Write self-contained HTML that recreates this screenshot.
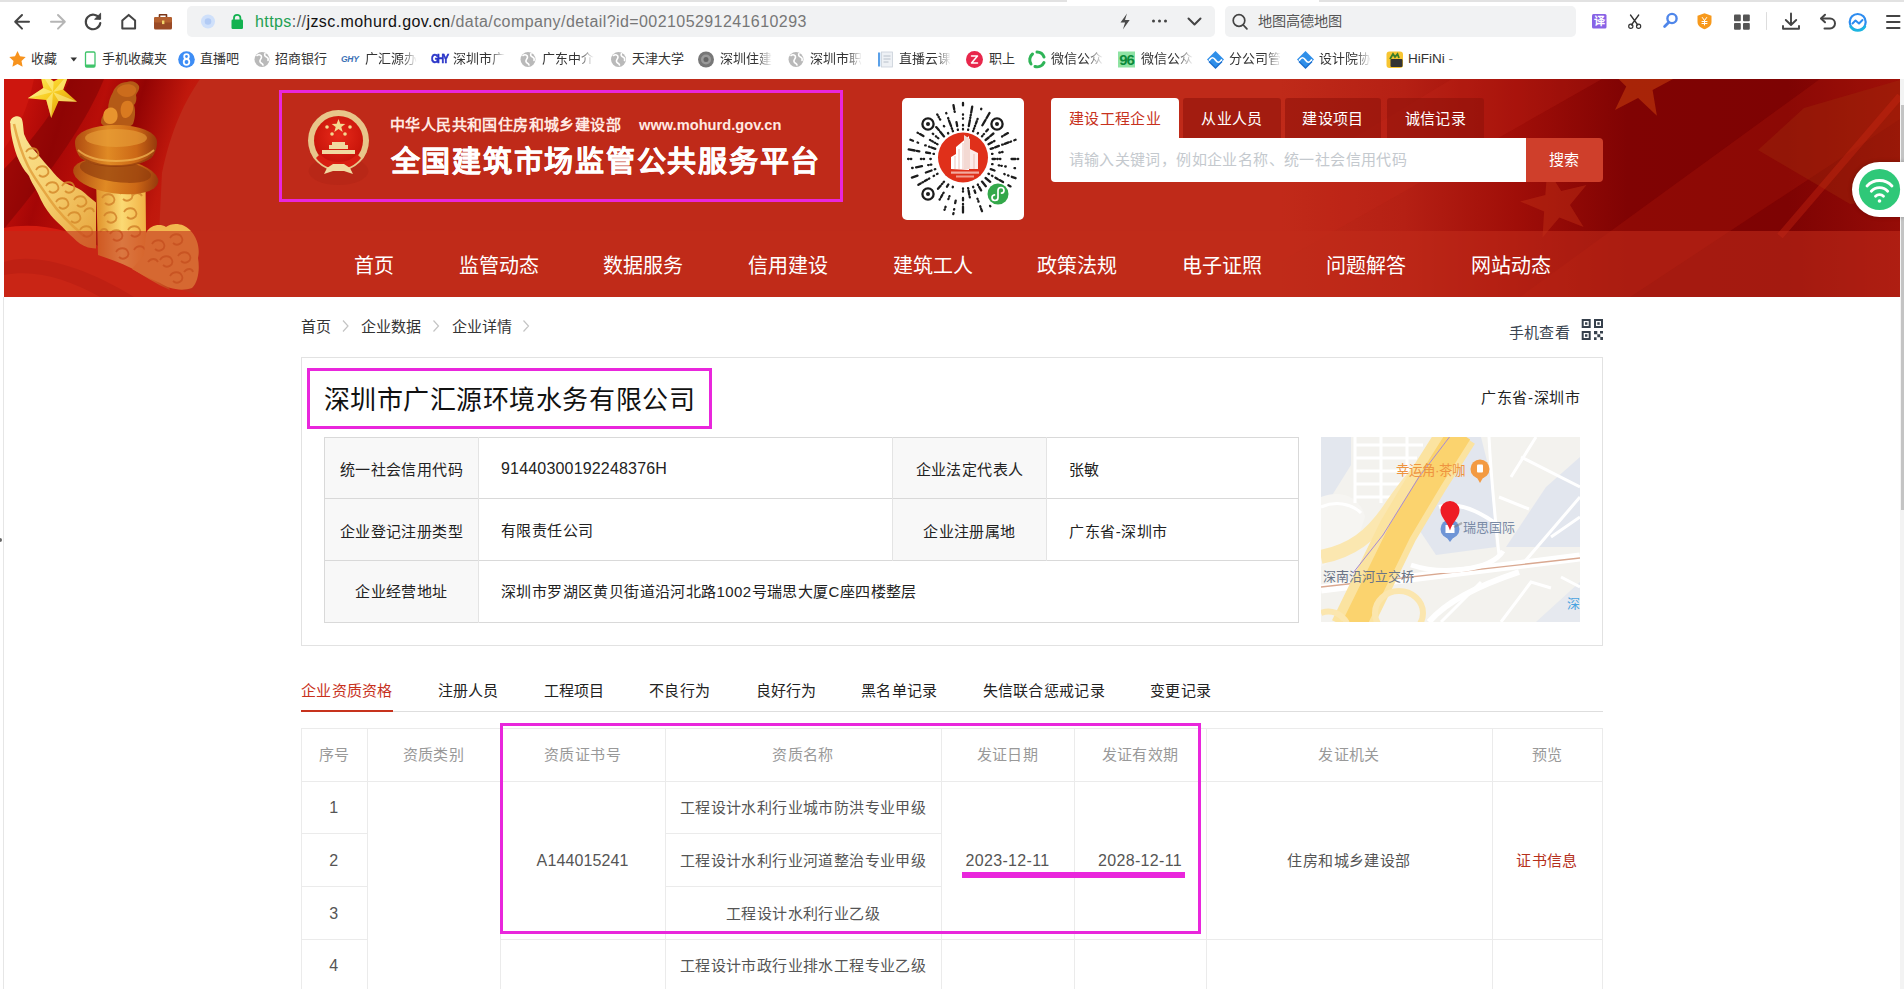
<!DOCTYPE html>
<html lang="zh-CN"><head><meta charset="utf-8">
<style>
*{box-sizing:border-box;margin:0;padding:0}
html,body{width:1904px;height:989px;overflow:hidden;background:#fff;font-family:"Liberation Sans",sans-serif;color:#333}
.abs{position:absolute}
#root{position:relative;width:1904px;height:989px;overflow:hidden;background:#fff}
svg{position:absolute;overflow:visible}
/* browser chrome */
#addr{left:187px;top:6px;width:1028px;height:31px;background:#f1f2f3;border-radius:5px}
#sbox{left:1225px;top:6px;width:351px;height:31px;background:#f1f2f3;border-radius:5px}
.url{left:255px;top:12px;font-size:16px;letter-spacing:.42px;line-height:20px;color:#777;white-space:nowrap}
.bm{position:absolute;top:50px;font-size:13px;line-height:18px;color:#333;white-space:nowrap}
.fade{-webkit-mask-image:linear-gradient(90deg,#000 70%,transparent 100%);mask-image:linear-gradient(90deg,#000 70%,transparent 100%)}
/* header */
#hdr{left:4px;top:79px;width:1896px;height:218px;background:#bf2a19;overflow:hidden}
#navbar{left:0;top:152px;width:1896px;height:66px;background:rgba(194,44,27,0.57)}
.nav{position:absolute;top:253px;font-size:20px;line-height:26px;color:#fff;white-space:nowrap}
.mag{position:absolute;border:3px solid #e926dc}
.tab{position:absolute;top:98px;height:40px;background:rgba(140,16,10,0.55);color:#fff;font-size:15px;letter-spacing:.4px;line-height:41px;text-align:center;border-radius:3px 3px 0 0;white-space:nowrap}
/* content */
.bc{position:absolute;top:317px;font-size:15px;line-height:20px;color:#333;white-space:nowrap}
#card{left:301px;top:357px;width:1302px;height:289px;border:1px solid #e2e2e2;background:#fff}
.cell{position:absolute;font-size:15px;letter-spacing:.4px;line-height:20px;color:#222;white-space:nowrap}
.lab{position:absolute;background:#f8f8f8}
.ctab{position:absolute;top:681px;font-size:15px;letter-spacing:.3px;line-height:20px;color:#222;white-space:nowrap}
.th{position:absolute;top:745px;font-size:15px;letter-spacing:.4px;line-height:20px;color:#999;white-space:nowrap;transform:translateX(-50%)}
.td{position:absolute;font-size:15px;letter-spacing:.4px;line-height:20px;color:#555;white-space:nowrap;transform:translateX(-50%)}
.vl{position:absolute;width:1px;background:#ebebeb}
.hl{position:absolute;height:1px;background:#ebebeb}
.gl{position:absolute;background:#d9d9d9}
</style></head><body><div id="root">
<!-- ================= CHROME ================= -->
<div class="abs" style="left:0;top:0;width:1904px;height:2px;background:#e2e2e2"></div>
<div class="abs" style="left:1067px;top:0;width:252px;height:2px;background:#fff"></div>
<div class="abs" id="addr"></div>
<div class="abs" id="sbox"></div>
<svg style="left:0;top:0" width="1904" height="42" viewBox="0 0 1904 42" fill="none" stroke-linecap="round" stroke-linejoin="round">
  <!-- back -->
  <path d="M29 21.8H15.5M22 15l-6.8 6.8L22 28.6" stroke="#444" stroke-width="2"/>
  <!-- forward -->
  <path d="M51 21.8h13.5M58 15l6.8 6.8L58 28.6" stroke="#b5b5b5" stroke-width="2"/>
  <!-- reload -->
  <path d="M99.5 18.5A7.3 7.3 0 1 0 100.3 23" stroke="#444" stroke-width="2.1"/>
  <path d="M100.6 13.6v5.6h-5.6z" fill="#444" stroke="#444" stroke-width="1"/>
  <!-- home -->
  <path d="M122.3 20.5l6.4-5.6 6.4 5.6v8h-12.8z" stroke="#444" stroke-width="2"/>
  <!-- briefcase -->
  <rect x="154" y="17" width="18" height="12.5" rx="1.5" fill="#9a4a26"/>
  <path d="M159.5 17v-2.2h7V17" stroke="#7a3517" stroke-width="1.6"/>
  <rect x="154" y="17" width="18" height="5.5" rx="1.5" fill="#b4602f"/>
  <rect x="162" y="20.5" width="2.4" height="3.6" fill="#f0d36a"/>
  <!-- addr icons -->
  <circle cx="208" cy="21.5" r="7" fill="#cfe0fa"/><circle cx="208" cy="21.5" r="3.3" fill="#b2cbf5"/>
  <rect x="231.5" y="19.5" width="11.5" height="9.5" rx="1.2" fill="#13b250"/>
  <path d="M234 19.5v-1.5a3.2 3.2 0 0 1 6.4 0v1.5" stroke="#13b250" stroke-width="1.8"/>
  <!-- lightning -->
  <path d="M1127 13.5l-6.5 9h4.6l-2.2 7 6.8-9.4h-4.7z" fill="#4a4a4a"/>
  <!-- dots -->
  <circle cx="1153.5" cy="21" r="1.5" fill="#444"/><circle cx="1159.5" cy="21" r="1.5" fill="#444"/><circle cx="1165.5" cy="21" r="1.5" fill="#444"/>
  <!-- chevron -->
  <path d="M1188.5 18.5l6 6 6-6" stroke="#444" stroke-width="2"/>
  <!-- search icon -->
  <circle cx="1239" cy="20.5" r="5.8" stroke="#444" stroke-width="1.7"/><path d="M1243.3 25l3.6 3.8" stroke="#444" stroke-width="1.8"/>
  <!-- translate -->
  <rect x="1592" y="14" width="14.5" height="14.5" rx="1.5" fill="#8863e6"/>
  <!-- scissors -->
  <path d="M1630.5 15l7.3 10M1638.7 15l-7.3 10" stroke="#333" stroke-width="1.3"/>
  <circle cx="1630.8" cy="26.3" r="2.1" stroke="#333" stroke-width="1.2"/><circle cx="1638.6" cy="26.3" r="2.1" stroke="#333" stroke-width="1.2"/>
  <!-- blue magnifier -->
  <circle cx="1672" cy="18.5" r="4.6" stroke="#4f86ea" stroke-width="2.4"/><path d="M1668.6 22.5l-4 4" stroke="#4f86ea" stroke-width="2.8"/>
  <!-- shield -->
  <path d="M1704.5 13.2l7 2.6v6.2c0 3.6-3.2 5.8-7 7.2-3.800-1.400-7-3.600-7-7.200v-6.200z" fill="#f7991c" stroke="none"/>
  <path d="M1702.3 17.500l2.200 3 2.200-3M1704.500 20.500v4.500M1702 21.500h5M1702 23.500h5" stroke="#fff" stroke-width="1"/>
  <!-- grid -->
  <rect x="1734" y="14.500" width="6.800" height="6.800" rx="1" fill="#555"/><rect x="1743" y="14.500" width="6.800" height="6.800" rx="1" fill="#555"/>
  <rect x="1734" y="23" width="6.800" height="6.800" rx="1" fill="#555"/><rect x="1743" y="23" width="6.800" height="6.800" rx="1" fill="#555"/>
  <path d="M1766.500 12.500v17" stroke="#ddd" stroke-width="1"/>
  <!-- download -->
  <path d="M1791 13.500v11M1785.800 20l5.200 5 5.200-5M1783 26v2.800h16V26" stroke="#444" stroke-width="1.900"/>
  <!-- undo -->
  <path d="M1821.500 18.500h8.500a5 5 0 0 1 0 10h-5.500" stroke="#444" stroke-width="2"/><path d="M1825 14.800l-4 3.700 4 3.700" stroke="#444" stroke-width="2"/>
  <!-- blue circle -->
  <circle cx="1857.700" cy="22" r="8" fill="#fff" stroke="#2d8cf0" stroke-width="2.200"/>
  <path d="M1852.500 23.500l3-3 3.500 3 3.500-3.500" stroke="#2d8cf0" stroke-width="2"/>
  <path d="M1850.500 26.500a8.500 8.500 0 0 0 14.500 0" stroke="#1cb5e0" stroke-width="2.400"/>
  <!-- hamburger -->
  <path d="M1887 16h12.500M1887 22h12.500M1887 28h12.500" stroke="#444" stroke-width="2"/>
</svg>
<div class="abs" style="left:1593px;top:15px;width:13px;font-size:11px;line-height:13px;color:#fff;text-align:center;font-weight:bold">译</div>
<div class="abs url" id="url"><span style="color:#22a052">https</span><span style="color:#555">://</span><span style="color:#111">jzsc.mohurd.gov.cn</span>/data/company/detail?id=002105291241610293</div>
<div class="abs" id="stxt" style="left:1258px;top:12px;font-size:14.2px;line-height:18px;color:#555;white-space:nowrap">地图高德地图</div>
<!-- ================= BOOKMARKS ================= -->
<svg style="left:0;top:42px" width="1904" height="36" viewBox="0 42 1904 36" fill="none">
  <!-- star -->
  <path d="M17.500 51l2.500 5.300 5.700.700-4.200 4 1.100 5.700-5.100-2.800-5.100 2.800 1.100-5.700-4.200-4 5.700-.700z" fill="#f7931e"/>
  <path d="M70.500 57.500h6.500l-3.250 4z" fill="#333"/>
  <!-- phone -->
  <rect x="85.500" y="52" width="9.500" height="15" rx="1.200" fill="#fff" stroke="#3fc46a" stroke-width="1.300"/><rect x="85.500" y="64.500" width="9.500" height="2.500" fill="#3fc46a"/>
  <!-- 8 -->
  <circle cx="186.500" cy="59.500" r="8.300" fill="#3d8df5"/>
  <circle cx="186.500" cy="56.500" r="2.300" stroke="#fff" stroke-width="1.800"/><circle cx="186.500" cy="62" r="2.800" stroke="#fff" stroke-width="1.800"/>
  <!-- globes -->
  <g><circle cx="262" cy="59.500" r="7.500" fill="#b9b9b9"/><path d="M257 55.500c2-1.500 4.500-.500 4.500 1.500s-2 2.500-1.500 4.500 2.500 1.500 3 3.500M265 53.500c-1 1.500 0 3 1.500 3.500s2 2 1.500 3.500" stroke="#fff" stroke-width="1.600" stroke-linecap="round"/></g>
  <g transform="translate(266 0)"><circle cx="262" cy="59.500" r="7.500" fill="#b9b9b9"/><path d="M257 55.500c2-1.500 4.500-.500 4.500 1.500s-2 2.500-1.500 4.500 2.500 1.500 3 3.500M265 53.500c-1 1.500 0 3 1.500 3.500s2 2 1.500 3.500" stroke="#fff" stroke-width="1.600" stroke-linecap="round"/></g><g transform="translate(356.500 0)"><circle cx="262" cy="59.500" r="7.500" fill="#b9b9b9"/><path d="M257 55.500c2-1.500 4.500-.500 4.500 1.500s-2 2.500-1.500 4.500 2.500 1.500 3 3.500M265 53.500c-1 1.500 0 3 1.500 3.500s2 2 1.500 3.500" stroke="#fff" stroke-width="1.600" stroke-linecap="round"/></g><g transform="translate(534 0)"><circle cx="262" cy="59.500" r="7.500" fill="#b9b9b9"/><path d="M257 55.500c2-1.500 4.500-.500 4.500 1.500s-2 2.500-1.500 4.500 2.500 1.500 3 3.500M265 53.500c-1 1.500 0 3 1.500 3.500s2 2 1.500 3.500" stroke="#fff" stroke-width="1.600" stroke-linecap="round"/></g>
  <circle cx="706" cy="59.500" r="8" fill="#777"/><circle cx="706" cy="59.500" r="5" fill="#9a9a9a"/><circle cx="706" cy="59.500" r="2.500" fill="#666"/>
  <!-- doc -->
  <rect x="878" y="52.500" width="2.200" height="14" fill="#5aa0e8"/><rect x="881.500" y="52" width="11" height="15" fill="#eef1f5" stroke="#c9d0d9" stroke-width=".800"/>
  <path d="M883.500 56h7M883.500 59h7M883.500 62h5" stroke="#b8c0ca" stroke-width="1"/>
  <!-- Z -->
  <circle cx="974.500" cy="59.500" r="8.500" fill="#e8274b"/><path d="M971.500 56h6l-6 7h6" stroke="#fff" stroke-width="1.500" stroke-linejoin="round" stroke-linecap="round"/>
  <!-- green swirl -->
  <path d="M1037 52a7.500 7.500 0 0 1 7 5" stroke="#2fb457" stroke-width="3" stroke-linecap="round"/><path d="M1044 62.500a7.500 7.500 0 0 1-9 4" stroke="#2fb457" stroke-width="3" stroke-linecap="round"/><path d="M1031 64a7.500 7.500 0 0 1 1.500-10" stroke="#2fb457" stroke-width="3" stroke-linecap="round"/>
  <!-- 96 -->
  <rect x="1118" y="51.500" width="17" height="16" fill="#8fe3a4"/>
  <!-- diamonds -->
  <g><path d="M1215.500 51l8.500 8.500-8.500 8.500-8.500-8.500z" fill="#2f8fe9"/><path d="M1209.500 60c2-3 4-3 6 0s4 3 6 0" stroke="#fff" stroke-width="1.700" stroke-linecap="round"/><path d="M1209 61.500l6.500 6.500 6.500-6.500" stroke="#1a6fcf" stroke-width="1.500"/></g>
  <g transform="translate(90 0)"><path d="M1215.500 51l8.500 8.500-8.500 8.500-8.500-8.500z" fill="#2f8fe9"/><path d="M1209.500 60c2-3 4-3 6 0s4 3 6 0" stroke="#fff" stroke-width="1.700" stroke-linecap="round"/><path d="M1209 61.500l6.500 6.500 6.500-6.500" stroke="#1a6fcf" stroke-width="1.500"/></g>
  <!-- hifini -->
  <rect x="1386.500" y="51.500" width="16.500" height="16.500" rx="3" fill="#f7c531"/><rect x="1390.500" y="59" width="12" height="8" rx="1" fill="#333"/><path d="M1390 59l3-5 2 3 2.500-3 1.500 4" stroke="#3b7d2a" stroke-width="1.800"/>
</svg>
<div class="abs" style="left:1118px;top:51px;width:17px;font-size:15px;line-height:17px;font-weight:bold;color:#0b8a3a;letter-spacing:-1.200px;text-align:center">96</div>
<div class="abs" style="left:341px;top:54px;font-size:8.500px;line-height:10px;font-weight:bold;font-style:italic;color:#3a6fb5;letter-spacing:-.300px">GHY</div>
<div class="abs" style="left:431px;top:52px;font-size:10px;line-height:14px;font-weight:bold;color:#2a35c8;-webkit-text-stroke:.400px #2a35c8;letter-spacing:-1.700px;transform:scaleY(1.350);transform-origin:0 50%">GHY</div>
<div class="bm" style="left:31px">收藏</div>
<div class="bm" style="left:101.500px">手机收藏夹</div>
<div class="bm" style="left:200px">直播吧</div>
<div class="bm" style="left:275px">招商银行</div>
<div class="bm fade" style="left:365px">广汇源办</div>
<div class="bm fade" style="left:452.500px">深圳市广</div>
<div class="bm fade" style="left:541.500px">广东中介</div>
<div class="bm" style="left:631.500px">天津大学</div>
<div class="bm fade" style="left:720px">深圳住建</div>
<div class="bm fade" style="left:810px">深圳市职</div>
<div class="bm fade" style="left:898.500px">直播云课</div>
<div class="bm" style="left:988.500px">职上</div>
<div class="bm fade" style="left:1050.500px">微信公众</div>
<div class="bm fade" style="left:1140.500px">微信公众</div>
<div class="bm fade" style="left:1228.500px">分公司管</div>
<div class="bm fade" style="left:1318.500px">设计院协</div>
<div class="bm" style="left:1408px;font-size:13.500px">HiFiNi <span style="color:#888">-</span></div>
<!-- ================= HEADER ================= -->
<div class="abs" id="hdr">
<svg style="left:0;top:0" width="1896" height="218" viewBox="4 79 1896 218">
  <defs>
    <linearGradient id="gR" x1="0" x2="1" y1="0" y2="0">
      <stop offset="0" stop-color="#bf2a19"/><stop offset=".200" stop-color="#b52014"/><stop offset=".380" stop-color="#a00e08"/><stop offset=".560" stop-color="#800303"/><stop offset=".820" stop-color="#7e0303"/><stop offset="1" stop-color="#960c07"/>
    </linearGradient>
    <linearGradient id="gL" x1="0" x2="1" y1="0" y2="0" gradientTransform="rotate(18 .5 .5)">
      <stop offset="0" stop-color="#c4100a"/><stop offset=".200" stop-color="#a40606"/><stop offset=".380" stop-color="#b80e08"/><stop offset=".560" stop-color="#930404"/><stop offset=".780" stop-color="#c0180c"/><stop offset="1" stop-color="#c62214"/>
    </linearGradient>
    <linearGradient id="gCol" x1="0" x2="1" y1="0" y2="0">
      <stop offset="0" stop-color="#e09028"/><stop offset=".350" stop-color="#fbda74"/><stop offset=".650" stop-color="#f2b448"/><stop offset="1" stop-color="#c05c1a"/>
    </linearGradient>
    <linearGradient id="gDisc" x1="0" x2="1" y1="0" y2="0">
      <stop offset="0" stop-color="#b04c10"/><stop offset=".400" stop-color="#e08a24"/><stop offset=".750" stop-color="#cc6816"/><stop offset="1" stop-color="#963a0c"/>
    </linearGradient>
    <linearGradient id="gWing" x1="0" x2="1" y1="0" y2="1">
      <stop offset="0" stop-color="#fbe898"/><stop offset=".500" stop-color="#f6d070"/><stop offset="1" stop-color="#e6a23a"/>
    </linearGradient>
    <linearGradient id="gStar" x1="0" x2="1" y1="0" y2="1">
      <stop offset="0" stop-color="#fff27a"/><stop offset=".500" stop-color="#f7cc1e"/><stop offset="1" stop-color="#d48a08"/>
    </linearGradient>
  </defs>
  <!-- right dark flag -->
  <rect x="1280" y="79" width="620" height="218" fill="url(#gR)"/>
  <path d="M1452 79h150L1280 262v-80z" fill="#c8281a" opacity=".220"/>
  <path d="M1520 297l300-218h80v40l-270 178z" fill="#c0200f" opacity=".220"/>
  <path d="M1758 150l46-42 96-28v120l-50 4z" fill="#a02c0a" opacity=".380"/>
  <path d="M1900 96l-120 140" stroke="#d02a14" stroke-width="7" opacity=".350" fill="none"/>
  <path d="M1645.0 48.4L1649.7 73.9L1675.5 77.7L1652.6 90.1L1656.9 115.8L1638.1 97.9L1615.0 109.9L1626.2 86.4L1607.6 68.2L1633.4 71.6z" fill="#c8400c" opacity=".550"/>
  <path d="M1547.3 169.1L1561.2 191.0L1586.5 184.9L1570.0 205.0L1583.6 227.1L1559.4 217.6L1542.5 237.4L1544.1 211.4L1520.1 201.5L1545.3 195.0z" fill="#c03016" opacity=".450"/>
  <!-- left flag drapes -->
  <path d="M4 79h196c-8 12-15 24-20 36-8 18-14 38-18 58l-6 124H4z" fill="url(#gL)"/>
  <path d="M70 79h34c-16 40-50 90-100 150v-60c30-30 52-60 66-90z" fill="#7e0303" opacity=".550"/>
  <path d="M4 79h30c-6 30-16 50-30 70z" fill="#d41a10" opacity=".600"/>
  <path d="M4 228c30-6 70 0 100 22 30 20 60 36 100 47H4z" fill="#d41c10"/>
  <path d="M4 262c30-10 80 4 130 35H100c-32-18-64-28-96-22z" fill="#a80a06" opacity=".550"/>
  <!-- star -->
  <g transform="translate(53 92)">
    <path d="M16.7 -19.9L10.2 -2.5L24.1 9.7L5.6 8.9L-1.8 25.9L-6.7 8.0L-25.2 6.3L-9.7 -3.9L-13.8 -22.0L0.7 -10.5z" fill="url(#gStar)"/>
    <path d="M0 0L16.7 -19.9L10.2 -2.5zM0 0L24.1 9.7L5.6 8.9zM0 0L-1.8 25.9L-6.7 8.0zM0 0L-25.2 6.3L-9.7 -3.9zM0 0L-13.8 -22.0L0.7 -10.5z" fill="#fff8a8" opacity=".500"/>
  </g>
  <!-- wing -->
  <path d="M10 123c0-5 6-8 10-6 3 1 3 8 4 17 3 8 8 14 13.500 20 5 6 9 11 13 15 4 5 8 10 13.500 13.500 4 2 7 3 11 4.500 5 2 9 5 13 9l8 6.500v46c-4-.300-6-.500-8-1-6-2-10-5-15-10-4-3-7-7-11-11-4-4-8-7-11-11-5-6-9-13-13-22-4-8-7-12-9-17.600-3-4-5-6-6.600-9-4-7-7-14-8.800-22-1.500-6-3.300-14-3.300-22z" fill="url(#gWing)"/>
  <path d="M14 124c3 14 7 28 14 42 6 12 14 22 22 34 8 12 20 24 34 36" stroke="#e09a34" stroke-width="2.500" fill="none" opacity=".750"/>
  <path d="M26 152c3-5 10-5 12 0s-5 9-9 5M36 170c3-5 10-5 12 0s-5 9-9 5M46 186c3-5 10-5 12 0s-5 9-9 5M56 202c3-5 10-5 12 0s-5 9-9 5M68 216c3-5 10-5 12 0s-5 9-9 5M80 230c3-5 10-5 12 0s-5 9-9 5M62 186c3-5 10-5 12 0s-5 9-9 5M74 200c3-5 10-5 12 0s-5 9-9 5M84 212c3-5 9-5 10 0" stroke="#d58a2c" stroke-width="1.800" fill="none" opacity=".850"/>
  <!-- lion -->
  <path d="M113 92c2-6 8-10 14-10 4-2 10 0 12 4 1 4-2 6-3 9 1 4 0 8-2 10 2 6 1 14-1 19-3 4-10 4-16 4-7 0-14-1-16-5 0-6 3-10 7-13 0-7 2-13 5-18z" fill="#b45a16"/>
  <path d="M104 112c3-6 11-6 13 0s-1 12-7 12-8-6-6-12z" fill="#e8942e"/>
  <path d="M122 104c3-5 10-4 11 1s-2 12-7 13-7-8-4-14z" fill="#d97a20"/>
  <path d="M118 88c4-4 12-5 16-2s2 8-2 10-10 1-13-2 -2-4-1-6z" fill="#cc6c1c"/>
  <!-- column shaft -->
  <path d="M96 178h49.500l.500 56 24 56c-14-6-26-14-38-21.500-12-6-24-10-34-13.500z" fill="url(#gCol)"/>
  <path d="M102 198c3-5 10-5 12 0s-5 9-9 5M120 194c3-5 10-5 12 0s-5 9-9 5M104 216c3-5 10-5 12 0s-5 9-9 5M124 212c3-5 10-5 12 0s-5 9-9 5M110 234c3-5 10-5 12 0s-5 9-9 5M128 230c3-5 10-5 12 0s-5 9-9 5M116 252c3-5 10-5 12 0s-5 9-9 5M134 250c3-5 9-5 11 0M132 196c3-4 8-4 10 0M100 232c2-4 6-4 8 0" stroke="#d1822a" stroke-width="1.800" fill="none" opacity=".850"/>
  <!-- discs -->
  <g transform="rotate(8 116 174)"><ellipse cx="116" cy="176" rx="43" ry="17.500" fill="url(#gDisc)"/><ellipse cx="115" cy="171" rx="36" ry="11" fill="#8e3a0c" opacity=".650"/></g>
  <path d="M75 142c0-10 18-17 41-17s41 7 41 17c0 6-2 12-6 16-8 6-22 8-35 8s-27-2-35-8c-4-4-6-10-6-16z" fill="url(#gDisc)"/>
  <ellipse cx="116" cy="138" rx="31" ry="9" fill="#eaa23a" opacity=".600"/>
  <path d="M78 150c10 9 26 11 38 11s28-2 38-11" stroke="#f2b552" stroke-width="1.800" fill="none" opacity=".750"/>
  <path d="M80 156c10 8 24 10 36 10s26-2 36-10" stroke="#8a360a" stroke-width="2" fill="none" opacity=".600"/>
  <!-- right cloud -->
  <path d="M146 233c4-8 14-10 20-6 6-5 18-4 24 3 8 8 10 20 8 28 2 12 0 24-6 30-12 4-24 0-32-5-10-5-20-9-28-14l12-14z" fill="#f2b850"/>
  <path d="M152 244c3-5 10-5 12 0s-5 9-9 5M170 238c3-5 10-5 12 0s-5 9-9 5M160 260c3-5 10-5 12 0s-5 9-9 5M178 256c3-5 10-5 12 0s-5 9-9 5M170 276c3-5 10-5 12 0s-5 9-9 5M148 262c3-4 8-4 10 0M184 272c3-4 8-4 9 0" stroke="#cc8028" stroke-width="1.800" fill="none" opacity=".850"/>
</svg>
<div class="abs" id="navbar"></div>
</div>
<!-- left thin line -->
<div class="abs" style="left:3px;top:297px;width:1px;height:692px;background:#e6e6e6"></div>
<div class="abs" style="left:0;top:538px;width:2px;height:4px;background:#666;border-radius:0 2px 2px 0"></div>
<!-- magenta box 1 -->
<div class="mag" style="left:279px;top:90px;width:564px;height:112px"></div>
<!-- emblem -->
<svg style="left:305px;top:107px" width="68" height="72" viewBox="305 107 68 72">
  <defs><radialGradient id="gE" cx=".5" cy=".4" r=".6"><stop offset="0" stop-color="#e82a1a"/><stop offset="1" stop-color="#c41208"/></radialGradient></defs>
  <ellipse cx="338.500" cy="147" rx="30" ry="14" fill="#8a1a10" opacity=".130" transform="translate(0 24)"/>
  <circle cx="338.500" cy="140.500" r="30.500" fill="#e8c58a"/>
  <circle cx="338.500" cy="140.500" r="24.500" fill="url(#gE)"/>
  <path d="M338.500 119l1.800 4.800 5 .200-4 3.100 1.400 4.900-4.200-2.900-4.200 2.900 1.400-4.900-4-3.100 5-.200z" fill="#f4d890"/>
  <circle cx="327" cy="127" r="1.800" fill="#f4d890"/><circle cx="350" cy="127" r="1.800" fill="#f4d890"/><circle cx="332" cy="134" r="1.800" fill="#f4d890"/><circle cx="345" cy="134" r="1.800" fill="#f4d890"/>
  <path d="M329 149h19v-4h-3v-3h-13v3h-3zM322 154h33v-4h-33z" fill="#f1d9a0"/>
  <path d="M316 158c6 8 14 11 22.500 11s16.500-3 22.500-11l-4-4c-4 5-11 8-18.500 8s-14.500-3-18.500-8z" fill="#d81e10"/>
  <path d="M327 168l6-4h11l6 4 3 6-9-3h-11l-9 3z" fill="#f1d9a0"/>
</svg>
<div class="abs" id="t1" style="left:390px;top:114.500px;font-size:15px;line-height:20px;font-weight:bold;color:#ffe9e2;white-space:nowrap;letter-spacing:.400px">中华人民共和国住房和城乡建设部</div>
<div class="abs" id="t1b" style="left:639px;top:114.500px;font-size:14.650px;line-height:20px;font-weight:bold;color:#ffe9e2;white-space:nowrap">www.mohurd.gov.cn</div>
<div class="abs" id="t2" style="left:390.500px;top:144px;font-size:29px;line-height:36px;font-weight:bold;color:#fff;-webkit-text-stroke:.250px #fff;white-space:nowrap;letter-spacing:1.750px">全国建筑市场监管公共服务平台</div>
<!-- QR -->
<div class="abs" style="left:902px;top:98px;width:122px;height:122px;background:#fff;border-radius:5px"></div>
<svg id="qr" style="left:902px;top:98px" width="122" height="122" viewBox="-61 -61 122 122"><path d="M29.5 0.0L32.0 0.0M34.2 0.0L34.7 0.0M36.9 0.0L37.4 0.0M48.5 0.0L52.5 0.0M54.7 0.0L55.2 0.0M29.1 5.1L29.5 5.2M35.7 6.3L36.1 6.4M38.3 6.8L38.8 6.8M42.2 7.4L42.7 7.5M51.5 9.1L52.0 9.2M27.7 10.1L31.5 11.5M41.3 15.0L41.7 15.2M45.0 16.4L45.5 16.6M48.8 17.8L52.6 19.2M25.5 14.7L26.0 15.0M29.0 16.7L29.4 17.0M32.5 18.7L34.6 20.0M36.5 21.1L40.0 23.1M45.4 26.2L47.5 27.4M22.6 19.0L27.2 22.8M19.0 22.6L22.8 27.2M14.8 25.5L15.0 26.0M16.1 27.9L18.1 31.4M27.1 46.9L27.3 47.3M10.1 27.7L10.3 28.2M11.5 31.5L12.3 33.8M14.4 39.7L14.6 40.1M15.4 42.2L15.5 42.7M17.2 47.3L17.4 47.7M18.1 49.8L19.0 52.2M5.1 29.1L5.2 29.5M5.6 31.7L6.3 35.7M6.7 37.8L6.8 38.3M0.0 29.5L0.0 30.0M0.0 32.2L0.0 32.7M0.0 38.9L0.0 41.4M0.0 44.9L0.0 45.4M0.0 47.6L0.0 53.6M-7.3 41.6L-7.8 44.0M-8.8 50.1L-8.9 50.6M-9.5 54.1L-9.7 55.1M-10.1 27.7L-10.3 28.2M-13.5 37.1L-13.7 37.6M-14.4 39.7L-14.6 40.1M-17.4 47.8L-17.6 48.3M-18.3 50.4L-18.5 50.8M-14.7 25.5L-16.0 27.7M-19.4 33.7L-19.7 34.1M-20.8 36.0L-22.0 38.2M-23.1 40.1L-23.4 40.5M-19.0 22.6L-19.3 23.0M-20.7 24.7L-21.0 25.0M-22.4 26.7L-25.0 29.8M-25.5 14.8L-26.0 15.0M-29.0 16.8L-29.4 17.0M-33.7 19.5L-34.1 19.7M-36.0 20.8L-38.2 22.1M-40.1 23.2L-40.5 23.4M-42.4 24.5L-44.6 25.8M-27.7 10.1L-28.2 10.3M-31.5 11.5L-37.1 13.5M-45.5 16.6L-51.1 18.6M-31.7 5.6L-32.2 5.7M-34.4 6.1L-34.9 6.1M-41.0 7.2L-46.9 8.3M-50.3 8.9L-50.8 9.0M-32.2 0.0L-32.7 0.0M-38.9 0.0L-39.4 0.0M-41.6 0.0L-42.1 0.0M-51.7 0.0L-52.2 0.0M-54.4 0.0L-54.9 0.0M-29.1 -5.1L-29.5 -5.2M-33.0 -5.8L-36.9 -6.5M-43.7 -7.7L-46.2 -8.1M-48.4 -8.5L-54.3 -9.6M-27.7 -10.1L-31.5 -11.5M-33.5 -12.2L-34.0 -12.4M-37.3 -13.6L-37.8 -13.7M-44.9 -16.3L-45.4 -16.5M-50.0 -18.2L-52.6 -19.2M-25.5 -14.8L-26.0 -15.0M-27.9 -16.1L-28.3 -16.4M-30.2 -17.5L-30.7 -17.7M-32.6 -18.8L-33.0 -19.1M-39.6 -22.9L-43.0 -24.9M-44.9 -26.0L-45.4 -26.2M-24.7 -20.7L-25.0 -21.0M-26.7 -22.4L-27.1 -22.8M-29.8 -25.0L-30.2 -25.3M-19.0 -22.6L-22.8 -27.2M-24.2 -28.9L-26.8 -31.9M-14.8 -25.5L-15.0 -26.0M-18.8 -32.6L-19.1 -33.0M-22.8 -39.5L-23.1 -39.9M-24.2 -41.8L-24.4 -42.3M-25.5 -44.2L-25.8 -44.6M-10.1 -27.7L-10.3 -28.2M-11.0 -30.3L-11.2 -30.7M-11.9 -32.8L-14.0 -38.4M-14.7 -40.5L-14.9 -41.0M-16.6 -45.6L-16.8 -46.0M-5.1 -29.1L-5.2 -29.5M-5.8 -33.0L-6.5 -36.9M-8.3 -47.2L-8.4 -47.7M-8.8 -49.8L-9.5 -53.8M-0.0 -29.5L-0.0 -30.0M-0.0 -33.5L-0.0 -34.0M-0.0 -40.2L-0.0 -40.7M-0.0 -44.2L-0.0 -44.7M-0.0 -53.6L-0.0 -56.0M5.1 -29.1L5.2 -29.5M5.8 -33.0L6.9 -38.9M7.2 -41.1L7.3 -41.6M7.7 -43.7L7.8 -44.2M8.2 -46.4L9.2 -52.3M10.1 -27.7L10.3 -28.2M11.0 -30.3L11.2 -30.7M11.9 -32.8L12.1 -33.3M12.9 -35.3L13.7 -37.7M14.5 -39.7L14.6 -40.2M18.1 -49.8L18.3 -50.3M14.7 -25.5L15.0 -26.0M19.4 -33.7L22.4 -38.9M23.5 -40.8L26.5 -46.0M19.0 -22.6L19.3 -23.0M20.7 -24.7L21.0 -25.0M23.3 -27.7L24.9 -29.6M22.6 -19.0L25.7 -21.5M27.3 -22.9L30.4 -25.5M25.5 -14.7L29.0 -16.7M30.9 -17.8L31.4 -18.1M39.1 -22.5L39.5 -22.8M41.4 -23.9L44.9 -25.9M27.7 -10.1L30.1 -10.9M32.1 -11.7L35.9 -13.1M39.2 -14.3L39.7 -14.4M41.7 -15.2L45.5 -16.6M47.5 -17.3L48.0 -17.5M51.3 -18.7L52.6 -19.2M29.1 -5.1L29.5 -5.2M36.3 -6.4L36.8 -6.5M39.0 -6.9L39.5 -7.0" stroke="#1c1c1c" stroke-width="2.3" stroke-linecap="round" fill="none"/><circle cx="-35" cy="-35" r="5.6" fill="none" stroke="#1c1c1c" stroke-width="2.3"/><circle cx="-35" cy="-35" r="2" fill="#1c1c1c"/><circle cx="34" cy="-35" r="5.6" fill="none" stroke="#1c1c1c" stroke-width="2.3"/><circle cx="34" cy="-35" r="2" fill="#1c1c1c"/><circle cx="-35" cy="35" r="5.6" fill="none" stroke="#1c1c1c" stroke-width="2.3"/><circle cx="-35" cy="35" r="2" fill="#1c1c1c"/><circle cx="0" cy="-1.5" r="25" fill="#e0301a"/>
<path d="M-12 10v-12l5-3v-7l6-5 7-6v34z" fill="#fff"/><path d="M1-24l6 4v30h-6z" fill="#f3d9d3"/><path d="M7-10l8 4v16h-8z" fill="#fff" opacity=".9"/><path d="M-8-3v13M-4-10v20M0-16v26M11-5v15" stroke="#e8b4aa" stroke-width=".8"/>
<rect x="-12" y="12.5" width="28" height="2.2" fill="#f6c9c0" opacity=".8"/><rect x="-7" y="16.5" width="18" height="2" fill="#f6c9c0" opacity=".7"/><circle cx="35" cy="35" r="11.5" fill="#fff"/><circle cx="35" cy="35" r="10.5" fill="#33a84a"/><path d="M35 38.500v-7a3 3 0 0 1 6 0c0 1.500-1.200 2.500-2.500 2.700M35 31.500v7a3 3 0 0 1-6 0c0-1.500 1.200-2.500 2.500-2.700" stroke="#fff" stroke-width="1.700" fill="none" stroke-linecap="round"/></svg>
<!-- tabs/search -->
<div class="abs" style="left:1051px;top:98px;width:128px;height:41px;background:#fff;border-radius:4px 4px 0 0"></div>
<div class="abs" style="left:1051px;top:138px;width:475px;height:44px;background:#fff;border-radius:0 0 0 4px"></div>
<div class="abs" style="left:1526px;top:138px;width:77px;height:44px;background:#cf3f2b;border-radius:0 4px 4px 0;color:#fff;font-size:15px;letter-spacing:.400px;line-height:44px;text-align:center">搜索</div>
<div class="abs" style="left:1051px;top:98px;width:128px;height:40px;color:#c7321d;font-size:15px;letter-spacing:.400px;line-height:41px;text-align:center;white-space:nowrap">建设工程企业</div>
<div class="tab" style="left:1183px;width:98px">从业人员</div>
<div class="tab" style="left:1285px;width:96px">建设项目</div>
<div class="tab" style="left:1387px;width:97px">诚信记录</div>
<div class="abs" style="left:1068.500px;top:149px;font-size:15px;letter-spacing:.400px;line-height:21px;color:#c4c9ce;white-space:nowrap">请输入关键词，例如企业名称、统一社会信用代码</div>
<!-- nav -->
<div class="nav" style="left:354px">首页</div>
<div class="nav" style="left:459px">监管动态</div>
<div class="nav" style="left:603px">数据服务</div>
<div class="nav" style="left:748px">信用建设</div>
<div class="nav" style="left:892.500px">建筑工人</div>
<div class="nav" style="left:1037px">政策法规</div>
<div class="nav" style="left:1181.500px">电子证照</div>
<div class="nav" style="left:1326px">问题解答</div>
<div class="nav" style="left:1470.500px">网站动态</div>
<!-- scrollbar -->
<div class="abs" style="left:1900px;top:79px;width:4px;height:910px;background:#f3f3f3"></div>
<div class="abs" style="left:1900.500px;top:105px;width:3.500px;height:405px;background:#c4c4c4"></div>
<!-- wifi widget -->
<div class="abs" style="left:1852px;top:162px;width:60px;height:55px;background:#fff;border-radius:27.500px 0 0 27.500px;box-shadow:0 0 4px rgba(0,0,0,.250)"></div>
<svg style="left:1858px;top:168px" width="43" height="43" viewBox="-21.500 -21.500 43 43" fill="none" stroke-linecap="round">
  <circle r="20.600" fill="#2fc878"/>
  <path d="M-12.500-3.500a17 17 0 0 1 25 0" stroke="#fff" stroke-width="2.800"/>
  <path d="M-8.200 1.800a11 11 0 0 1 16.400 0" stroke="#fff" stroke-width="2.800"/>
  <path d="M-4 6.800a5.600 5.600 0 0 1 8 0" stroke="#fff" stroke-width="2.800"/>
  <circle cy="11.500" r="1.800" fill="#fff"/>
</svg>
<!-- ================= CONTENT ================= -->
<div class="bc" style="left:301px">首页</div>
<div class="bc" style="left:361px">企业数据</div>
<div class="bc" style="left:451.500px">企业详情</div>
<svg style="left:340px;top:319px" width="200" height="14" viewBox="340 319 200 14" fill="none" stroke="#c4c4c4" stroke-width="1.200">
  <path d="M343 320.500l5 5.500-5 5.500M433.500 320.500l5 5.500-5 5.500M523.500 320.500l5 5.500-5 5.500"/>
</svg>
<div class="abs" style="left:1508.500px;top:323px;font-size:15px;letter-spacing:.400px;line-height:20px;color:#3a4450;white-space:nowrap">手机查看</div>
<svg style="left:1581px;top:318px" width="23" height="23" viewBox="1581 318 23 23" fill="none" stroke="#36404c" stroke-width="2">
  <rect x="1582.700" y="320" width="7" height="7"/><rect x="1595" y="320" width="7" height="7"/><rect x="1582.700" y="332" width="7" height="7"/>
  <path d="M1585 322.300h2.400v2.400h-2.400zM1597.300 322.300h2.400v2.400h-2.400zM1585 334.300h2.400v2.400h-2.400z" fill="#36404c" stroke="none"/>
  <path d="M1594 331h3.300v3.300H1594zM1600 331h3v2.600h-3zM1597.300 334.300h3v3h-3zM1594 337.300h2.600v2.700H1594zM1600.300 337h2.700v3h-2.700z" fill="#36404c" stroke="none"/>
</svg>
<div class="abs" id="card"></div>
<div class="mag" style="left:307px;top:368px;width:404.500px;height:61px"></div>
<div class="abs" id="cname" style="left:323.500px;top:381.500px;letter-spacing:.550px;font-size:26px;line-height:36px;color:#111;white-space:nowrap">深圳市广汇源环境水务有限公司</div>
<div class="abs" style="right:323.500px;top:388px;font-size:15px;letter-spacing:.650px;line-height:20px;color:#222;white-space:nowrap">广东省-深圳市</div>
<!-- info table -->
<div class="lab" style="left:324px;top:437px;width:155px;height:186px"></div>
<div class="lab" style="left:892px;top:437px;width:155px;height:124px"></div>
<div class="gl" style="left:324px;top:437px;width:975px;height:1px"></div>
<div class="gl" style="left:324px;top:498px;width:975px;height:1px"></div>
<div class="gl" style="left:324px;top:560px;width:975px;height:1px"></div>
<div class="gl" style="left:324px;top:622px;width:975px;height:1px"></div>
<div class="gl" style="left:324px;top:437px;width:1px;height:186px"></div>
<div class="gl" style="left:478px;top:437px;width:1px;height:186px;background:#e4e4e4"></div>
<div class="gl" style="left:892px;top:437px;width:1px;height:124px;background:#e4e4e4"></div>
<div class="gl" style="left:1046px;top:437px;width:1px;height:124px;background:#e4e4e4"></div>
<div class="gl" style="left:1298px;top:437px;width:1px;height:186px"></div>
<div class="cell" style="left:324px;width:155px;text-align:center;top:459.500px">统一社会信用代码</div>
<div class="cell" style="left:324px;width:155px;text-align:center;top:521.500px">企业登记注册类型</div>
<div class="cell" style="left:324px;width:155px;text-align:center;top:582px">企业经营地址</div>
<div class="cell" style="left:892px;width:155px;text-align:center;top:459.500px">企业法定代表人</div>
<div class="cell" style="left:892px;width:155px;text-align:center;top:521.500px">企业注册属地</div>
<div class="cell" id="code" style="left:501px;top:459px;font-size:16px;letter-spacing:.180px">91440300192248376H</div>
<div class="cell" style="left:501px;top:520.500px">有限责任公司</div>
<div class="cell" id="adr" style="left:501px;top:582px">深圳市罗湖区黄贝街道沿河北路1002号瑞思大厦C座四楼整层</div>
<div class="cell" style="left:1069px;top:460px">张敏</div>
<div class="cell" style="left:1069px;top:521.500px;letter-spacing:.550px">广东省-深圳市</div>
<!-- map -->
<svg style="left:1321px;top:437px" width="259" height="185" viewBox="0 0 259 185">
  <defs><clipPath id="mc"><rect width="259" height="185"/></clipPath></defs>
  <g clip-path="url(#mc)">
  <rect width="259" height="185" fill="#f3f2ee"/>
  <!-- blue-grey areas -->
  <path d="M0 0h30v28L10 60H0z" fill="#e3e7ee"/>
  <path d="M120 0h40l10 40 5 70-60 8-20-30z" fill="#e2e6ee"/>
  <path d="M185 110l40-60 34-30v90z" fill="#e2e6ee"/>
  <path d="M215 185l44-40v40z" fill="#e6e9ef"/>
  <path d="M0 60c20-8 40 0 44 20l-10 30-34 20z" fill="#f6f5f2"/>
  <!-- grid blocks -->
  <g stroke="#fff" stroke-width="3" fill="none">
    <path d="M34 8h68M34 21h62M34 34h56M34 47h50M34 60h44M34 0v66M60 0v66M86 0v52"/>
    <path d="M0 70c14-6 30-4 40 6M168 0c2 40 6 80 10 118M178 60l30 12M200 20l59 30M259 60l-60 70M215 0l-25 40M230 100l29-20M240 140l19 10M180 185l30-40 20 6M120 185l40-40"/>
  </g>
  <!-- horizontal road -->
  <path d="M0 152L259 120" stroke="#fff" stroke-width="9"/>
  <path d="M0 150L259 121" stroke="#d9a890" stroke-width="1.300"/>
  <path d="M90 128c30 10 80 6 92-14" stroke="#fff" stroke-width="5" fill="none"/>
  <path d="M118 70c20-6 44 6 64 22" stroke="#fff" stroke-width="4" fill="none"/>
  <path d="M108 185c20-24 60-40 90-50" stroke="#fff" stroke-width="6" fill="none"/>
  <!-- yellow road -->
  <path d="M0 120c30-6 50-20 70-50s40-50 60-75" stroke="#fbe7b0" stroke-width="14" fill="none"/>
  <path d="M137-4L108 42 77 94 29 192" stroke="#fbe3a0" stroke-width="40" fill="none" stroke-linejoin="round"/>
  <path d="M139-4L110 42 79 94 31 192" stroke="#fbd36e" stroke-width="24" fill="none" stroke-linejoin="round"/>
  <path d="M130-2L98 40 62 98 32 136" stroke="#a58ad6" stroke-width="1" fill="none"/>
  <ellipse cx="78" cy="176" rx="24" ry="22" fill="none" stroke="#fbe6ae" stroke-width="6"/>
  <path d="M0 176c10-4 20 0 26 10" stroke="#fbe6ae" stroke-width="6" fill="none"/>
  <!-- poi orange -->
  <circle cx="159" cy="32" r="9.500" fill="#f39a42"/><path d="M155 39l4 7 4-7z" fill="#f39a42"/><rect x="156" y="27.500" width="6" height="8" rx="1" fill="#fff"/>
  <!-- blue poi -->
  <circle cx="129" cy="92" r="9.500" fill="#6f95d6"/><path d="M124.500 99l4.500 6 4.500-6z" fill="#6f95d6"/><rect x="124.500" y="88" width="9" height="8" fill="#fff"/>
  <!-- red pin -->
  <path d="M129 93.500c-2-8-9.500-13-9.500-20a9.500 9.500 0 0 1 19 0c0 7-7.500 12-9.500 20z" fill="#ee1c25"/>
  <path d="M133 90l8-4" stroke="#777" stroke-width="2" opacity=".500"/>
  </g>
</svg>
<div class="abs" style="left:1396px;top:463px;font-size:13.500px;line-height:16px;color:#ef9440;white-space:nowrap">幸运角·茶咖</div>
<div class="abs" style="left:1463px;top:520px;font-size:13px;line-height:16px;color:#7a8ba6;white-space:nowrap">瑞思国际</div>
<div class="abs" style="left:1323px;top:569px;font-size:13px;line-height:16px;color:#6a7486;white-space:nowrap">深南沿河立交桥</div>
<div class="abs" style="left:1567px;top:596px;width:13px;overflow:hidden;font-size:13px;line-height:16px;color:#4aa3e0;white-space:nowrap">深</div>
<!-- content tabs -->
<div class="ctab" style="left:301px;color:#c7321d">企业资质资格</div>
<div class="ctab" style="left:437.500px">注册人员</div>
<div class="ctab" style="left:543.500px">工程项目</div>
<div class="ctab" style="left:649px">不良行为</div>
<div class="ctab" style="left:755.500px">良好行为</div>
<div class="ctab" style="left:861px">黑名单记录</div>
<div class="ctab" style="left:982.500px">失信联合惩戒记录</div>
<div class="ctab" style="left:1150px">变更记录</div>
<div class="abs" style="left:301px;top:711px;width:1302px;height:1px;background:#dedede"></div>
<div class="abs" style="left:301px;top:710px;width:92px;height:2px;background:#c7321d"></div>
<!-- data table -->
<div class="hl" style="left:301px;top:728px;width:1302px"></div>
<div class="hl" style="left:301px;top:781px;width:1302px"></div>
<div class="hl" style="left:301px;top:833px;width:66px"></div><div class="hl" style="left:665px;top:833px;width:277px"></div>
<div class="hl" style="left:301px;top:886px;width:66px"></div><div class="hl" style="left:665px;top:886px;width:277px"></div>
<div class="hl" style="left:301px;top:939px;width:66px"></div><div class="hl" style="left:500px;top:939px;width:1103px"></div>
<div class="vl" style="left:301px;top:728px;height:261px"></div>
<div class="vl" style="left:367px;top:728px;height:261px"></div>
<div class="vl" style="left:500px;top:728px;height:261px"></div>
<div class="vl" style="left:665px;top:728px;height:261px"></div>
<div class="vl" style="left:941px;top:728px;height:261px"></div>
<div class="vl" style="left:1074px;top:728px;height:261px"></div>
<div class="vl" style="left:1206px;top:728px;height:261px"></div>
<div class="vl" style="left:1492px;top:728px;height:261px"></div>
<div class="vl" style="left:1602px;top:728px;height:261px"></div>
<div class="th" style="left:334px">序号</div>
<div class="th" style="left:433.500px">资质类别</div>
<div class="th" style="left:582.500px">资质证书号</div>
<div class="th" style="left:803px">资质名称</div>
<div class="th" style="left:1007.500px">发证日期</div>
<div class="th" style="left:1140px">发证有效期</div>
<div class="th" style="left:1349px">发证机关</div>
<div class="th" style="left:1547px">预览</div>
<div class="td" style="left:334px;top:797.500px;font-size:16px">1</div>
<div class="td" style="left:334px;top:850.500px;font-size:16px">2</div>
<div class="td" style="left:334px;top:903.500px;font-size:16px">3</div>
<div class="td" style="left:334px;top:955.500px;font-size:16px">4</div>
<div class="td" style="left:582.500px;top:850.500px;font-size:16px;letter-spacing:.100px">A144015241</div>
<div class="td" style="left:803px;top:797.500px">工程设计水利行业城市防洪专业甲级</div>
<div class="td" style="left:803px;top:850.500px">工程设计水利行业河道整治专业甲级</div>
<div class="td" style="left:803px;top:903.500px">工程设计水利行业乙级</div>
<div class="td" style="left:803px;top:955.500px">工程设计市政行业排水工程专业乙级</div>
<div class="td" style="left:1007.500px;top:850.500px;font-size:16px;letter-spacing:.350px">2023-12-11</div>
<div class="td" style="left:1140px;top:850.500px;font-size:16px;letter-spacing:.350px">2028-12-11</div>
<div class="td" style="left:1349px;top:850.500px">住房和城乡建设部</div>
<div class="td" style="left:1547px;top:850.500px;color:#b5301c">证书信息</div>
<!-- magenta annotations -->
<div class="mag" style="left:500px;top:723px;width:701px;height:211px"></div>
<div class="abs" style="left:962px;top:872px;width:223px;height:6px;background:#e926dc"></div>
</div></body></html>
